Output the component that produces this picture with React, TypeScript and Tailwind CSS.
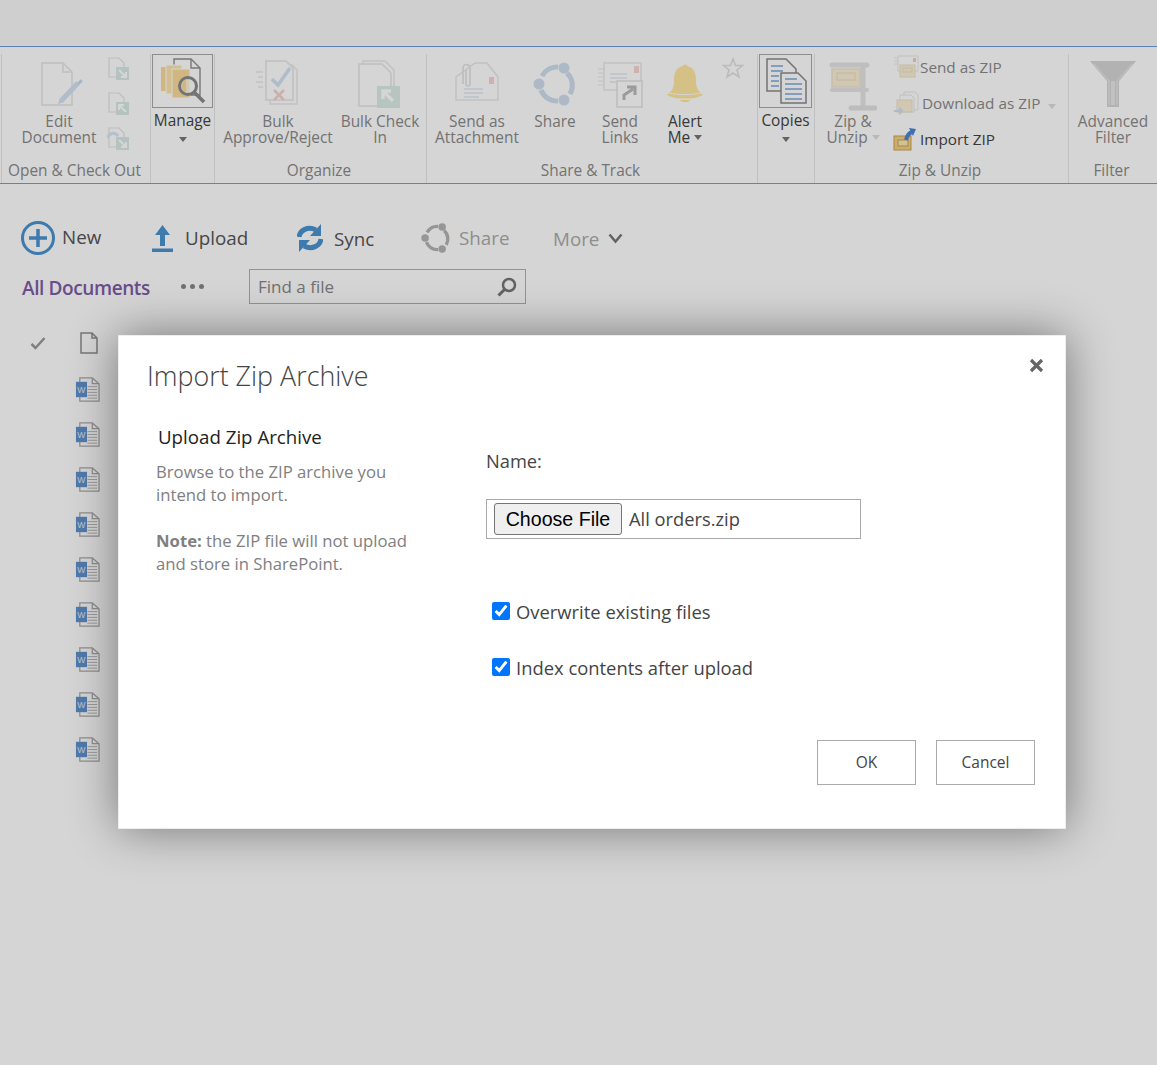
import React from "react";

const EditDoc = () => (
  <svg width="42" height="48" viewBox="0 0 42 48" className="ml-[6px] opacity-80">
    <path d="M1 3H22L31 12V45H1Z" fill="#fff" stroke="#e0e0e0" strokeWidth="1.5" />
    <path d="M22 3V12H31" fill="none" stroke="#e0e0e0" strokeWidth="1.5" />
    <path d="M37 23L20 41" stroke="#c9dcf0" strokeWidth="5" />
    <path d="M17 44L19 38L23 42Z" fill="#c9dcf0" />
    <path d="M38 21L40 23" stroke="#b8cfe8" strokeWidth="5" />
  </svg>
);

const SmallDoc = ({ rot = 0, swoosh = false }: { rot?: number; swoosh?: boolean }) => (
  <svg width="24" height="24" viewBox="0 0 24 24" className="opacity-80">
    <path d="M2 1H12L17 6V20H2Z" fill="#fff" stroke="#dedede" strokeWidth="1.2" />
    <rect x="9" y="10" width="13" height="13" fill="#cfe6df" />
    <path d="M12 13L19 20M19 15V20H14" transform={`rotate(${rot} 15.5 16.5)`} stroke="#fff" strokeWidth="2" fill="none" />
    {swoosh && <path d="M0 11C3 5 8 5 11 9" stroke="#cfe0f2" strokeWidth="3" fill="none" />}
  </svg>
);

const ManageIcon = () => (
  <svg width="46" height="46" viewBox="0 0 46 46">
    <path d="M14 1H31L40 10V37H14Z" fill="#fff" stroke="#8f8f8f" strokeWidth="1.4" />
    <path d="M31 1V10H40" fill="none" stroke="#8f8f8f" strokeWidth="1.4" />
    <rect x="1" y="9" width="14" height="24" fill="#fadc9c" />
    <rect x="6" y="7" width="16" height="29" fill="#fde4ad" stroke="#fff" />
    <rect x="12" y="11" width="18" height="29" fill="#fadc9c" stroke="#fff" />
    <circle cx="28" cy="28" r="8.5" fill="#fff" fillOpacity=".6" stroke="#8a8a8a" strokeWidth="3" />
    <path d="M26 21V35A8 8 0 0 1 26 21Z" fill="#fadc9c" />
    <path d="M34 34L44 44" stroke="#8a8a8a" strokeWidth="3.5" />
  </svg>
);

const BulkApprove = () => (
  <svg width="46" height="48" viewBox="0 0 46 48" className="opacity-80">
    <path d="M15 5H37L42 10V44H15Z" fill="#fff" stroke="#e4e4e4" strokeWidth="1.5" />
    <path d="M11 1H31L38 8V40H11Z" fill="#fff" stroke="#e0e0e0" strokeWidth="1.5" />
    <path d="M1 12H8M3 17H8M1 22H8M3 27H8" stroke="#e2e2e2" strokeWidth="1.3" />
    <path d="M17 19L23 25L35 8" fill="none" stroke="#c7dcf0" strokeWidth="3.5" />
    <path d="M19 30L29 40M29 30L19 40" stroke="#f0c8c0" strokeWidth="2.5" />
  </svg>
);

const BulkCheck = () => (
  <svg width="44" height="48" viewBox="0 0 44 48" className="opacity-80">
    <path d="M5 1H27L36 10V44H5Z" fill="#fff" stroke="#e4e4e4" strokeWidth="1.5" />
    <path d="M1 4H24L33 13V46H1Z" fill="#fff" stroke="#e0e0e0" strokeWidth="1.5" />
    <rect x="19" y="26" width="23" height="22" fill="#d2e8e0" />
    <path d="M35 41L25 31M25 39V31H33" fill="none" stroke="#fff" strokeWidth="3.5" />
  </svg>
);

const Attach = () => (
  <svg width="44" height="44" viewBox="0 0 44 44" className="opacity-80">
    <path d="M1 15L20 1H32L43 15V38H1Z" fill="#fff" stroke="#e2e2e2" strokeWidth="1.5" />
    <path d="M8 22V6A3.5 3.5 0 0 1 15 6V22A2 2 0 0 1 11 22V8" fill="none" stroke="#dcdcdc" strokeWidth="1.6" />
    <rect x="34" y="15" width="5" height="7" fill="#f6cdc4" />
    <path d="M9 27H28M9 31H28M9 35H24" stroke="#d7e3f1" strokeWidth="1.4" />
  </svg>
);

const ShareRing = ({ c = "#cfdeee", size = 44 }: { c?: string; size?: number }) => (
  <svg width={size} height={size} viewBox="0 0 44 44">
    <path d="M34 11A17 17 0 0 1 37 32" fill="none" stroke={c} strokeWidth="5" />
    <path d="M8 28A17 17 0 0 0 25 39" fill="none" stroke={c} strokeWidth="5" />
    <path d="M9 14A17 17 0 0 1 25 5" fill="none" stroke={c} strokeWidth="5" />
    <circle cx="31" cy="6" r="5.5" fill={c} />
    <circle cx="6" cy="22" r="5.5" fill={c} />
    <circle cx="31" cy="38" r="5.5" fill={c} />
  </svg>
);

const SendLinks = () => (
  <svg width="46" height="46" viewBox="0 0 46 46" className="opacity-80">
    <path d="M1 7H8M1 11H8M1 15H8M1 19H8M1 23H8" stroke="#e6e6e6" strokeWidth="1.2" />
    <path d="M7 1H44V28H7Z" fill="#fff" stroke="#e4e4e4" strokeWidth="1.5" />
    <rect x="37" y="4" width="5" height="7" fill="#f6cdc4" />
    <path d="M13 12H30M13 16H30M13 20H24" stroke="#dbe5f2" strokeWidth="1.3" />
    <rect x="20" y="19" width="25" height="26" fill="#fff" stroke="#dcdcdc" strokeWidth="1.5" />
    <path d="M27 38V33L36 27M30 25H38V33" fill="none" stroke="#a9a9a9" strokeWidth="3" />
  </svg>
);

const Bell = () => (
  <svg width="38" height="40" viewBox="0 0 38 40">
    <circle cx="19" cy="3" r="2.5" fill="#ffe6a0" />
    <path d="M19 2C10 2 8 9 8 17C8 24 6 27 1 31C6 34 12 34.500 19 34.500C26 34.500 32 34 37 31C32 27 30 24 30 17C30 9 28 2 19 2Z" fill="#ffe6a0" />
    <path d="M3 29C12 31 26 31 35 29" fill="none" stroke="#fff" strokeWidth="1" />
    <path d="M14 36H24C23 39 15 39 14 36Z" fill="#ffe6a0" />
  </svg>
);

const Star = () => (
  <svg width="22" height="22" viewBox="0 0 22 22">
    <path d="M11 2L13.500 8.500H20.500L15 13L17 20L11 16L5 20L7 13L1.500 8.500H8.500Z" fill="none" stroke="#e0e0e0" strokeWidth="1.6" />
  </svg>
);

const CopiesIcon = () => (
  <svg width="42" height="46" viewBox="0 0 42 46">
    <path d="M2 1H21L31 11V33H2Z" fill="#fff" stroke="#8a8a8a" strokeWidth="1.5" />
    <path d="M6 8H18M6 13H18M6 18H14M6 23H14M6 28H14" stroke="#7ea8da" strokeWidth="1.7" />
    <path d="M16 15H33L41 23V45H16Z" fill="#fff" stroke="#8a8a8a" strokeWidth="1.5" />
    <path d="M20 21H32M20 26H37M20 31H37M20 36H37M20 41H37" stroke="#7ea8da" strokeWidth="1.7" />
  </svg>
);

const ZipClamp = () => (
  <svg width="48" height="50" viewBox="0 0 48 50" className="opacity-80">
    <path d="M3 4H38" stroke="#dfdfdf" strokeWidth="5" strokeLinecap="round" />
    <path d="M3 29H38" stroke="#dfdfdf" strokeWidth="4" strokeLinecap="round" />
    <path d="M34 4V46" stroke="#dfdfdf" strokeWidth="5" />
    <path d="M22 47H46" stroke="#dcdcdc" strokeWidth="5" strokeLinecap="round" />
    <rect x="3" y="8" width="28" height="18" fill="#fbeccb" stroke="#e8e0cc" strokeWidth="1.5" />
    <rect x="8" y="12" width="18" height="7" fill="none" stroke="#e8d9ae" strokeWidth="1.2" />
  </svg>
);

const SendZip = () => (
  <svg width="26" height="24" viewBox="0 0 26 24" className="opacity-80">
    <path d="M1 3H6M1 6H6M1 9H6" stroke="#e6e6e6" />
    <rect x="5" y="1" width="20" height="15" fill="#fff" stroke="#e4e4e4" />
    <rect x="20" y="3" width="3" height="4" fill="#f6bdb0" />
    <rect x="7" y="10" width="15" height="12" fill="#fbeccb" stroke="#e8dcb8" />
    <rect x="10" y="13" width="9" height="4" fill="none" stroke="#e8d9ae" />
  </svg>
);

const DownZip = () => (
  <svg width="26" height="26" viewBox="0 0 26 26" className="opacity-80">
    <path d="M11 2H22L25 5V20H11Z" fill="#fff" stroke="#dfdfdf" />
    <path d="M7 5H18L21 8V22H7Z" fill="#fff" stroke="#dfdfdf" />
    <rect x="4" y="10" width="15" height="12" fill="#fbeccb" stroke="#e8dcb8" />
    <path d="M1 21H9M6 18L9 21L6 24" stroke="#c4d8ee" strokeWidth="2" fill="none" />
  </svg>
);

const ImportZip = () => (
  <svg width="26" height="24" viewBox="0 0 26 24">
    <rect x="1" y="9" width="17" height="14" fill="#f3cf85" stroke="#c9a452" />
    <rect x="5" y="13" width="10" height="6" fill="#fbe8b8" stroke="#c9a452" />
    <path d="M13 13C14 9 16 6 19 5" fill="none" stroke="#4a85d6" strokeWidth="4" />
    <path d="M16 1L23 2L20 9Z" fill="#4a85d6" />
  </svg>
);

const Funnel = () => (
  <svg width="46" height="46" viewBox="0 0 46 46">
    <path d="M0 0H46L29 20V46H17V20Z" fill="#d6d6d6" />
    <path d="M4 3L19 20V44M42 3L27 20V44" fill="none" stroke="#ececec" strokeWidth="1" />
    <path d="M21 20H25V44H21Z" fill="#e8e8e8" />
  </svg>
);

const Caret = ({ c = "#777" }: { c?: string }) => (
  <svg width="8" height="5" viewBox="0 0 8 5" className="inline-block">
    <path d="M0 0H8L4 5Z" fill={c} />
  </svg>
);

const Large = ({
  w,
  icon,
  lines,
  top = "pt-[6px]",
  active = false,
  caret,
}: {
  w: string;
  icon: React.ReactNode;
  lines: string[];
  top?: string;
  active?: boolean;
  caret?: boolean;
}) => (
  <div className={`${w} shrink-0 flex flex-col items-center`}>
    <div className={`h-[60px] ${top} flex justify-center items-start`}>{icon}</div>
    <div className={`text-[15.4px] leading-[16px] text-center whitespace-nowrap ${active ? "text-[#444]" : "text-[#8a8a8a]"}`}>
      {lines.map((l, i) => (
        <div key={l}>
          {l}
          {caret && i === lines.length - 1 && (
            <span className="ml-[4px] relative -top-[1px]">
              <Caret c={active ? "#777" : "#ddd"} />
            </span>
          )}
        </div>
      ))}
    </div>
  </div>
);

const Boxed = ({ w, icon, label, box }: { w: string; icon: React.ReactNode; label: string; box: string }) => (
  <div className={`${w} shrink-0 flex flex-col items-center`}>
    <div className={`${box} h-[54px] border border-[#a9a9a9] flex items-center justify-center`}>{icon}</div>
    <div className="mt-[5px] text-[15.4px] leading-[16px] text-[#444] whitespace-nowrap">{label}</div>
    <div className="mt-[2px] leading-[14px]">
      <Caret />
    </div>
  </div>
);

const Group = ({
  w,
  label,
  children,
  last = false,
}: {
  w: string;
  label?: string;
  children: React.ReactNode;
  last?: boolean;
}) => (
  <div className={`${w} shrink-0 h-[129px] flex flex-col ${last ? "" : "border-r border-[#e6e6e6]"}`}>
    <div className="h-[105px] flex">{children}</div>
    <div className="pr-[3px] text-[15.4px] leading-[24px] text-center text-[#8a8a8a] whitespace-nowrap">{label}</div>
  </div>
);

const ZipRow = ({
  icon,
  label,
  active,
  caret,
}: {
  icon: React.ReactNode;
  label: string;
  active?: boolean;
  caret?: boolean;
}) => (
  <div className="h-[36px] flex items-center">
    <div className="w-[27px] flex justify-start">{icon}</div>
    <span className={`text-[15.3px] whitespace-nowrap ${caret ? "ml-[2px]" : ""} ${active ? "text-[#444]" : "text-[#8a8a8a]"}`}>{label}</span>
    {caret && (
      <span className="ml-[8px] relative top-[2px]">
        <Caret c="#ddd" />
      </span>
    )}
  </div>
);

const WordIcon = () => (
  <svg width="25" height="25" viewBox="0 0 26 26">
    <path d="M5 1H18L25 7V25H5Z" fill="#fff" stroke="#aaa" strokeWidth="1.3" />
    <path d="M18 1V7H25" fill="none" stroke="#aaa" strokeWidth="1.3" />
    <path d="M13 10H23M13 13H23M13 16H23M13 19H23M13 22H23" stroke="#b5b5b5" strokeWidth="1" />
    <rect x="1" y="5" width="11.500" height="16" fill="#6092d0" />
    <text x="6.700" y="16.500" textAnchor="middle" fontSize="9" fill="#e8eef8" fontFamily="Liberation Sans, sans-serif">
      W
    </text>
  </svg>
);

const Check = ({ label }: { label: string }) => (
  <label className="h-[28px] flex items-center pl-[6px] text-[18.4px] text-[#444]">
    <input type="checkbox" defaultChecked className="w-[18px] h-[18px] m-0 -mt-[2px] accent-[#0075ff]" />
    <span className="ml-[6px]">{label}</span>
  </label>
);

export default function App() {
  return (
    <div className="relative w-full h-[1065px] overflow-hidden bg-white font-['Open_Sans','Liberation_Sans',sans-serif]">
      <div className="h-[46px] bg-[#f8f8f8]" />
      <div className="h-[138px] border-y border-[#6f9fe0] pt-[7px] flex bg-white">
        <div className="w-[2px] h-[129px] shrink-0 border-r border-[#e6e6e6]" />
        <Group w="w-[149px]" label="Open & Check Out">
          <Large w="w-[96px] ml-[9px]" icon={<EditDoc />} lines={["Edit", "Document"]} />
          <div className="pt-[3px] flex flex-col gap-[11px]">
            <SmallDoc />
            <SmallDoc rot={180} />
            <SmallDoc swoosh />
          </div>
        </Group>
        <Group w="w-[64px]">
          <Boxed w="w-[63px]" box="w-[61px]" icon={<ManageIcon />} label="Manage" />
        </Group>
        <Group w="w-[212px]" label="Organize">
          <Large w="w-[126px]" icon={<BulkApprove />} lines={["Bulk", "Approve/Reject"]} />
          <Large w="w-[78px]" icon={<BulkCheck />} lines={["Bulk Check", "In"]} />
        </Group>
        <Group w="w-[331px]" label="Share & Track">
          <Large w="w-[100px]" icon={<Attach />} lines={["Send as", "Attachment"]} top="pt-[8px]" />
          <Large w="w-[56px]" icon={<ShareRing />} lines={["Share"]} top="pt-[8px]" />
          <Large w="w-[74px]" icon={<SendLinks />} lines={["Send", "Links"]} top="pt-[8px]" />
          <Large w="w-[56px]" icon={<Bell />} lines={["Alert", "Me"]} top="pt-[10px]" active caret />
          <div className="w-[40px] pt-[3px] flex justify-center items-start">
            <Star />
          </div>
        </Group>
        <Group w="w-[57px]">
          <Boxed w="w-[55px]" box="w-[53px]" icon={<CopiesIcon />} label="Copies" />
        </Group>
        <Group w="w-[254px]" label="Zip & Unzip">
          <Large w="w-[76px]" icon={<ZipClamp />} lines={["Zip &", "Unzip"]} top="pt-[7px]" caret />
          <div className="ml-[2px] -mt-[5px]">
            <ZipRow icon={<SendZip />} label="Send as ZIP" />
            <ZipRow icon={<DownZip />} label="Download as ZIP" caret />
            <ZipRow icon={<ImportZip />} label="Import ZIP" active />
          </div>
        </Group>
        <Group w="w-[88px]" label="Filter" last>
          <Large w="w-[88px]" icon={<Funnel />} lines={["Advanced", "Filter"]} top="pt-[7px]" />
        </Group>
      </div>

      <div className="mt-[34px] h-[40px] flex items-center pl-[21px] text-[18.800px]">
        <div className="w-[131px] flex items-center gap-[7px] text-[#555]">
          <svg width="34" height="34" viewBox="0 0 34 34">
            <circle cx="17" cy="17" r="15.500" fill="none" stroke="#4a92cf" strokeWidth="3" />
            <path d="M17 8V26M8 17H26" stroke="#4a92cf" strokeWidth="3.500" />
          </svg>
          <span className="-mt-[2px]">New</span>
        </div>
        <div className="w-[145px] flex items-center gap-[12px] text-[#555]">
          <svg width="21" height="28" viewBox="0 0 21 28">
            <path d="M10.500 1L18 11H13V22H8V11H3Z" fill="#4a92cf" />
            <rect y="24.500" width="21" height="3.500" fill="#4a92cf" />
          </svg>
          <span>Upload</span>
        </div>
        <div className="w-[124px] flex items-center gap-[11px] text-[#555]">
          <svg width="26" height="30" viewBox="0 0 26 30">
            <path d="M2 14C3 7 11 3 19 7" fill="none" stroke="#4a92cf" strokeWidth="5" />
            <path d="M24 1V13H13Z" fill="#4a92cf" />
            <path d="M24 16C23 23 15 27 7 23" fill="none" stroke="#4a92cf" strokeWidth="5" />
            <path d="M2 29V17H13Z" fill="#4a92cf" />
          </svg>
          <span className="mt-[2px]">Sync</span>
        </div>
        <div className="w-[132px] flex items-center gap-[8px] text-[#aaa]">
          <ShareRing c="#b4b4b4" size={30} />
          <span>Share</span>
        </div>
        <div className="flex items-center gap-[9px] text-[#aaa]">
          <span className="mt-[2px]">More</span>
          <svg width="15" height="11" viewBox="0 0 15 11">
            <path d="M1.500 1.500L7.500 8.500L13.500 1.500" fill="none" stroke="#777" strokeWidth="2.500" />
          </svg>
        </div>
      </div>

      <div className="mt-[11px] h-[35px] flex items-center pl-[21px]">
        <div className="w-[160px] pl-[1px] mt-[3px] text-[19px] font-semibold tracking-[-0.4px] text-[#7f5ba6]">All Documents</div>
        <div className="w-[68px] flex gap-[4px] items-center">
          <span className="w-[5px] h-[5px] rounded-full bg-[#888]" />
          <span className="w-[5px] h-[5px] rounded-full bg-[#888]" />
          <span className="w-[5px] h-[5px] rounded-full bg-[#888]" />
        </div>
        <div className="w-[277px] h-[35px] border border-[#b0b0b0] flex items-center justify-between px-[8px] text-[17px] text-[#888]">
          <span className="mt-[1px]">Find a file</span>
          <svg width="20" height="20" viewBox="0 0 20 20">
            <circle cx="12" cy="8" r="6" fill="none" stroke="#777" strokeWidth="2.500" />
            <path d="M7.500 12.500L1.500 18.500" stroke="#777" strokeWidth="3" />
          </svg>
        </div>
      </div>

      <div className="mt-[16px] pl-[30px]">
        <div className="h-[45px] mb-[2px] flex items-center">
          <svg width="16" height="14" viewBox="0 0 16 14">
            <path d="M1.500 8L5.500 12L14.500 2" fill="none" stroke="#9a9a9a" strokeWidth="2.500" />
          </svg>
          <svg width="18" height="22" viewBox="0 0 18 22" className="ml-[34px]">
            <path d="M1 1H12L17 6V21H1Z M12 1V6H17" fill="none" stroke="#8f8f8f" strokeWidth="1.500" />
          </svg>
        </div>
        {[0, 1, 2, 3, 4, 5, 6, 7, 8].map((i) => (
          <div key={i} className="h-[45px] flex items-center pl-[45px]">
            <WordIcon />
          </div>
        ))}
      </div>

      <div className="absolute inset-0 bg-[rgba(0,0,0,0.165)]" />

      <div className="absolute left-[118px] top-[335px] w-[948px] h-[494px] bg-white ring-1 ring-inset ring-[#eeeeee] shadow-[0_0_45px_rgba(0,0,0,0.45)]">
        <button className="absolute right-[22px] top-[23px] text-[#666]" aria-label="Close">
          <svg width="15" height="15" viewBox="0 0 15 15" className="block">
            <path d="M2 2L13 13M13 2L2 13" stroke="#666" strokeWidth="3.200" />
          </svg>
        </button>
        <div className="pt-[21px] pl-[29px] text-[26.850px] leading-[40px] font-light text-[#444]">Import Zip Archive</div>
        <div className="mt-[27px] flex">
          <div className="w-[368px] pl-[38px] shrink-0">
            <div className="pl-[2px] text-[18.700px] leading-[28px] text-[#222]">Upload Zip Archive</div>
            <div className="mt-[9px] text-[16.700px] leading-[23px] text-[#808080]">
              <div>Browse to the ZIP archive you</div>
              <div>intend to import.</div>
              <div className="mt-[23px]">
                <span className="font-bold">Note:</span> the ZIP file will not upload
              </div>
              <div>and store in SharePoint.</div>
            </div>
          </div>
          <div className="flex-1">
            <div className="mt-[24px] text-[18.300px] leading-[28px] text-[#444]">Name:</div>
            <div className="mt-[24px] w-[375px] h-[40px] border border-[#a9a9a9] flex items-center pl-[7px]">
              <button className="w-[128px] h-[32px] pt-[1px] bg-[#efefef] border border-[#767676] rounded-[3px] text-[19.600px] text-black font-['Liberation_Sans',sans-serif]">
                Choose File
              </button>
              <span className="ml-[7px] text-[18.300px] text-[#444]">All orders.zip</span>
            </div>
            <div className="mt-[59px]">
              <Check label="Overwrite existing files" />
            </div>
            <div className="mt-[28px]">
              <Check label="Index contents after upload" />
            </div>
          </div>
        </div>
        <div className="mt-[58px] pr-[31px] flex justify-end gap-[20px]">
          <button className="w-[99px] h-[45px] pt-[1px] border border-[#ababab] text-[15.500px] text-[#444]">OK</button>
          <button className="w-[99px] h-[45px] pt-[1px] border border-[#ababab] text-[15.500px] text-[#444]">Cancel</button>
        </div>
      </div>
    </div>
  );
}
